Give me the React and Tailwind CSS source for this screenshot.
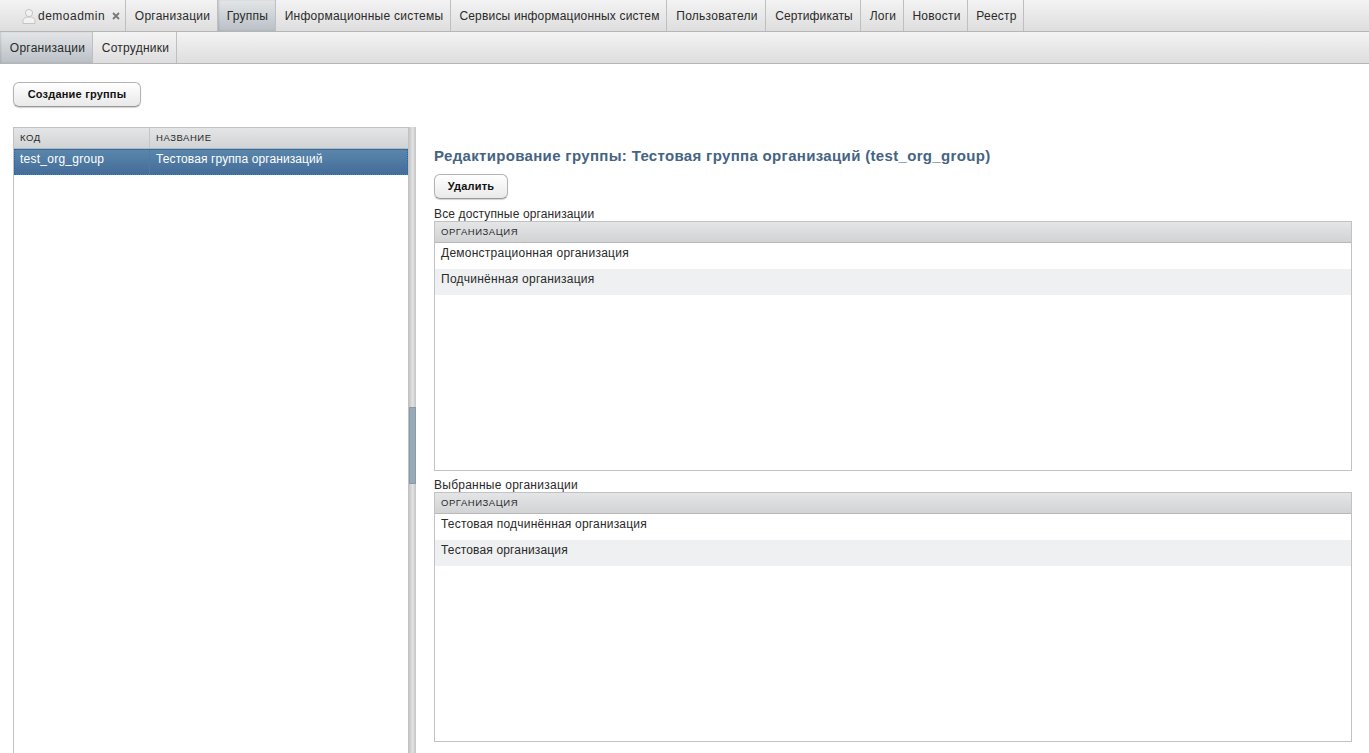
const top = [["Организации", 92, "tracking-[0.25px]"], ["Группы", 58, "tracking-[0.25px]"], ["Информационные системы", 175, "tracking-[0.25px]"], ["Сервисы информационных систем", 216, "tracking-[0.18px]"], ["Пользователи", 99, "tracking-[0.25px]"], ["Сертификаты", 95, "tracking-[0.1px]"], ["Логи", 43, "tracking-[0.25px]"], ["Новости", 64, "tracking-[0.25px]"], ["Реестр", 56, "tracking-[0.25px]"]];

function Tab({ label, w, active, first, tr = "tracking-[0.25px]" }) {
  return (
    <div
      style={{ width: w }}
      className={`flex h-full shrink-0 items-center justify-center border-r border-[#bdbfc1] text-[12px] ${tr} text-[#2a2a2a] ${first ? "pl-[3px]" : "pl-[2px]"} ${active ? "bg-gradient-to-b from-[#e4e6e8] to-[#b9c0c6] shadow-[inset_1px_0_2px_rgba(0,0,0,0.12)]" : ""}`}
    >
      {label}
    </div>
  );
}

function Btn({ label, w }) {
  return (
    <div
      style={{ width: w }}
      className="flex h-[25px] items-center justify-center rounded-[6px] border border-[#b3b3b3] border-b-[#999] bg-gradient-to-b from-white to-[#e9e9e9] text-[11px] font-bold tracking-[0.2px] text-[#111] shadow-[0_1px_1px_rgba(0,0,0,0.18)]"
    >
      {label}
    </div>
  );
}

function HeadCell({ label, className = "" }) {
  return (
    <div className={`flex h-full items-center pl-[6px] pt-[1px] text-[9.5px] tracking-[0.55px] text-[#2a2a2a] ${className}`}>
      {label}
    </div>
  );
}

function OrgTable({ rows, h }) {
  return (
    <div style={{ height: h }} className="border border-[#c2c2c2] bg-white">
      <div className="h-[21px] border-b border-[#b8b8b8] bg-gradient-to-b from-[#e4e5e6] to-[#d2d3d5]">
        <HeadCell label="ОРГАНИЗАЦИЯ" />
      </div>
      {rows.map(([r, t], i) => (
        <div key={r} className={`h-[26px] pl-[6px] pt-[1px] text-[12px] leading-[18px] ${t} text-[#2a2a2a] ${i % 2 ? "bg-[#eff0f1]" : "bg-white"}`}>
          {r}
        </div>
      ))}
    </div>
  );
}

export default function App() {
  return (
    <div className="flex h-[753px] w-[1369px] flex-col overflow-hidden bg-white font-['Liberation_Sans',Arial,sans-serif]">
      <div className="flex h-[32px] shrink-0 border-b border-[#b5b5b5] bg-gradient-to-b from-[#f3f3f3] to-[#dedede]">
        <div className="flex h-full w-[126px] shrink-0 items-center border-r border-[#bdbfc1] pl-[22px] text-[12px] tracking-[0.5px] text-[#2a2a2a]">
          <svg width="14" height="16" viewBox="0 0 14 16" className="mr-[2px] shrink-0">
            <circle cx="7" cy="5" r="3.6" fill="#f2f2f2" stroke="#c4c4c4" />
            <path d="M1 15.500v-3c0-2.200 2.600-3.500 6-3.500s6 1.300 6 3.500v3z" fill="#f2f2f2" stroke="#c4c4c4" />
          </svg>
          demoadmin
          <svg width="8" height="8" viewBox="0 0 8 8" className="ml-[7px]">
            <path d="M1 1l6 6M7 1l-6 6" stroke="#777" strokeWidth="1.800" />
          </svg>
        </div>
        {top.map(([l, w, tr]) => (
          <Tab key={l} label={l} w={w} tr={tr} active={l === "Группы"} />
        ))}
      </div>
      <div className="flex h-[32px] shrink-0 border-b border-[#b5b5b5] bg-gradient-to-b from-[#f3f3f3] to-[#dedede]">
        <Tab label="Организации" w={93} active first />
        <Tab label="Сотрудники" w={84} />
      </div>
      <div className="px-[13px] pt-[18px]">
        <Btn label="Создание группы" w={128} />
      </div>
      <div className="mt-[20px] flex min-h-0 flex-1 pl-[13px]">
        <div className="w-[396px] shrink-0 border border-b-0 border-[#c2c2c2]">
          <div className="flex h-[21px] border-b border-[#b8b8b8] bg-gradient-to-b from-[#e4e5e6] to-[#d2d3d5]">
            <HeadCell label="КОД" className="w-[136px] border-r border-[#c6c6c6]" />
            <HeadCell label="НАЗВАНИЕ" className="flex-1" />
          </div>
          <div className="flex h-[26px] border border-dotted border-[#1d69b4] bg-gradient-to-b from-[#5a86ab] to-[#446d99] text-[12px] leading-[18px] text-white">
            <div className="w-[135px] border-r border-[#4f7aa1] pl-[5px] tracking-[0.25px]">test_org_group</div>
            <div className="flex-1 pl-[6px] tracking-[0.1px]">Тестовая группа организаций</div>
          </div>
        </div>
        <div className="relative w-[7px] shrink-0 bg-gradient-to-r from-[#c4c4c4] via-[#e2e2e2] to-[#c4c4c4]">
          <div className="absolute left-0 top-[280px] h-[77px] w-[7px] border border-[#8b9aa6] bg-[#98a9b8]" />
        </div>
        <div className="min-w-0 flex-1 pl-[18px] pr-[17px] pt-[19px]">
          <h2 className="text-[15px] font-bold leading-[19px] tracking-[0.33px] text-[#456482]">
            Редактирование группы: Тестовая группа организаций (test_org_group)
          </h2>
          <div className="mt-[9px]">
            <Btn label="Удалить" w={74} />
          </div>
          <div className="mt-[8px] h-[14px] text-[12px] leading-[15px] tracking-[0.13px] text-[#2a2a2a]">Все доступные организации</div>
          <OrgTable h={250} rows={[["Демонстрационная организация", "tracking-[0.25px]"], ["Подчинённая организация", "tracking-[0.25px]"]]} />
          <div className="mt-[7px] h-[14px] text-[12px] leading-[15px] tracking-[0.25px] text-[#2a2a2a]">Выбранные организации</div>
          <OrgTable h={250} rows={[["Тестовая подчинённая организация", "tracking-[0.19px]"], ["Тестовая организация", "tracking-[0.15px]"]]} />
        </div>
      </div>
    </div>
  );
}
